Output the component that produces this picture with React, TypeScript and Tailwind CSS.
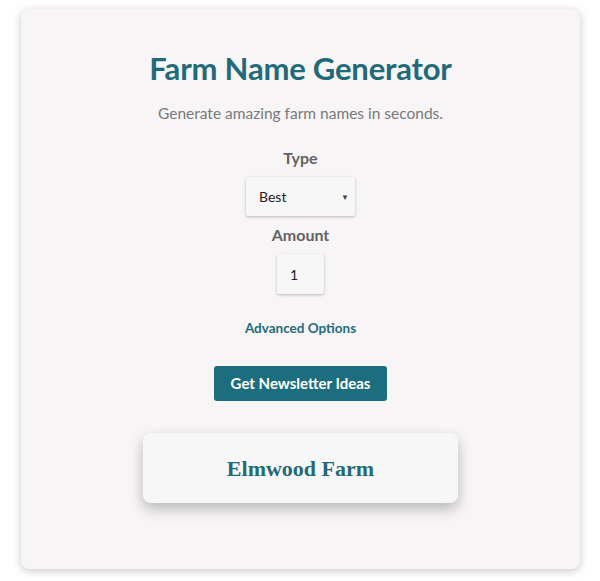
export default function App() {
  return (
    <div className="min-h-[581px] bg-white pt-[9px] pl-[21px] pr-[20px] font-['Lato',sans-serif]">
      <div className="h-[560px] rounded-lg bg-[#f7f5f6] shadow-[0_2px_8px_rgba(0,0,0,0.22)] flex flex-col items-center pt-[41px]">
        <h1 className="text-[31px] leading-9 font-bold text-[#1f6b7a] tracking-[-0.2px]">
          Farm Name Generator
        </h1>
        <p className="mt-[15px] text-[15.5px] leading-6 text-[#7a7a7a]">
          Generate amazing farm names in seconds.
        </p>

        <label className="mt-[21px] text-[16px] leading-6 font-bold text-[#636363]">Type</label>
        <div className="mt-[7px] w-[109px] h-[39px] bg-[#f8f7f7] shadow-[0_1px_3px_rgba(0,0,0,0.25)] rounded-[2px] flex items-center justify-between pl-[13px] pr-[6px] text-[14px] text-[#222]">
          <span>Best</span>
          <span className="text-[8px] text-[#444]">▼</span>
        </div>

        <label className="mt-[7px] text-[16px] leading-6 font-bold text-[#636363]">Amount</label>
        <div className="mt-[7px] w-[47px] h-[40px] bg-[#f8f7f7] shadow-[0_1px_3px_rgba(0,0,0,0.25)] rounded-[2px] flex items-center pl-[13px] text-[14px] text-[#222]">
          1
        </div>

        <a className="mt-[24px] text-[13.5px] leading-5 font-bold text-[#1f6b7a]">Advanced Options</a>

        <button className="mt-[28px] w-[173px] h-[35px] rounded-[3px] bg-[#1c6e7f] text-white text-[15px] font-bold">
          Get Newsletter Ideas
        </button>

        <div className="mt-[32px] w-[315px] h-[70px] rounded-lg bg-[#f8f7f7] shadow-[0_6px_14px_rgba(0,0,0,0.25)] flex items-center justify-center">
          <span className="font-['Liberation_Serif',serif] font-bold text-[22px] text-[#1f6b7a]">Elmwood Farm</span>
        </div>
      </div>
    </div>
  );
}
